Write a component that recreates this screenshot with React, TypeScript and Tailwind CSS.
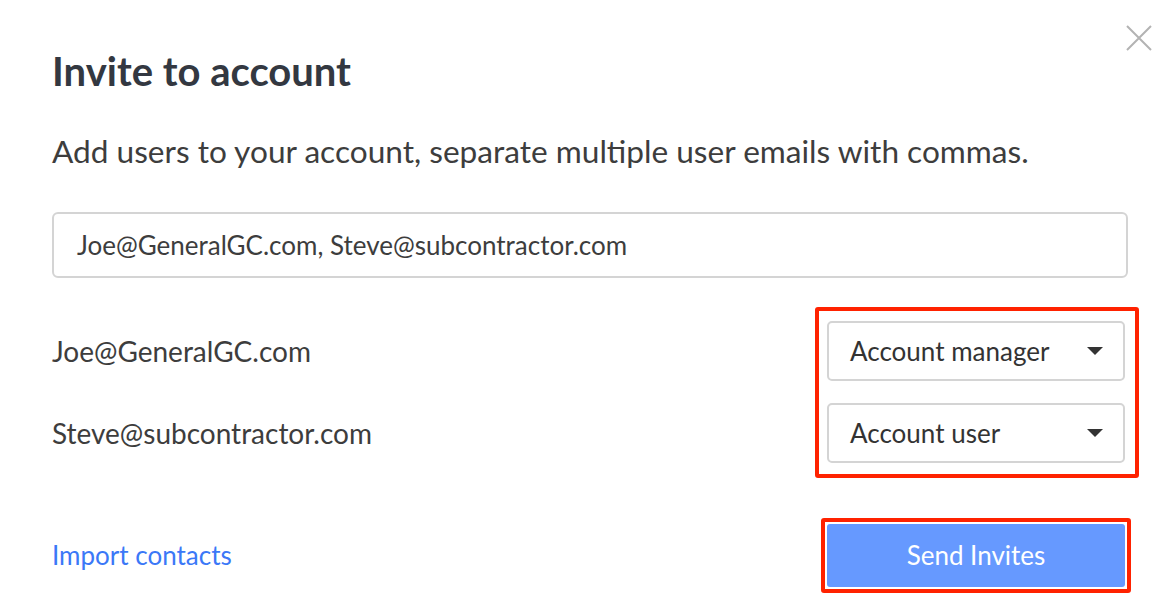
import React from "react";

const rows = [
  { email: "Joe@GeneralGC.com", role: "Account manager" },
  { email: "Steve@subcontractor.com", role: "Account user" },
];

function RoleSelect({ label }: { label: string }) {
  return (
    <div className="flex h-[60px] w-[298px] items-center justify-between rounded-[5px] border-2 border-[#d4d4d4] bg-white pl-[21px] pr-[20px] text-[26px] text-[#333]">
      <span>{label}</span>
      <svg width="16" height="8" viewBox="0 0 16 8" className="fill-[#333]">
        <path d="M0 0h16L8 8z" />
      </svg>
    </div>
  );
}

export default function App() {
  return (
    <div className="relative h-[614px] w-[1176px] bg-white font-['Lato',sans-serif]">
      {/* close */}
      <button className="absolute right-[24px] top-[25px] text-[#b3b3b3]">
        <svg width="26" height="26" viewBox="0 0 26 26" stroke="currentColor" strokeWidth="2">
          <path d="M1 1l24 24M25 1L1 25" />
        </svg>
      </button>

      <div className="pl-[52px] pr-[48px] pt-[47px]">
        <h1 className="text-[40px] font-bold leading-[48px] text-[#333841]">Invite to account</h1>
        <p className="mt-[38px] text-[31.6px] leading-[36px] text-[#3d3d3d]">
          Add users to your account, separate multiple user emails with commas.
        </p>

        <div className="mt-[43px] flex h-[66px] items-center rounded-[6px] border-2 border-[#d4d4d4] pl-[23px] text-[26px] text-[#3d3d3d]">
          Joe@GeneralGC.com, Steve@subcontractor.com
        </div>

        <div className="mt-[29px] flex justify-between">
          <div className="flex flex-col gap-[22px] pt-[14px] text-[28px] text-[#3d3d3d]">
            {rows.map((r) => (
              <div key={r.email} className="flex h-[60px] items-center">
                {r.email}
              </div>
            ))}
          </div>
          <div className="mr-[-11px] flex flex-col gap-[22px] rounded-[3px] border-4 border-[#ff2200] pb-[11px] pl-[8px] pr-[10px] pt-[10px]">
            {rows.map((r) => (
              <RoleSelect key={r.email} label={r.role} />
            ))}
          </div>
        </div>

        <div className="mt-[40px] flex items-center justify-between">
          <a className="text-[26px] text-[#3b78f7]">Import contacts</a>
          <div className="mr-[-3px] rounded-[3px] border-4 border-[#ff2200] p-[2px]">
            <button className="flex h-[63px] w-[298px] items-center justify-center rounded-[3px] bg-[#6699ff] text-[26px] text-white">
              Send Invites
            </button>
          </div>
        </div>
      </div>
    </div>
  );
}
